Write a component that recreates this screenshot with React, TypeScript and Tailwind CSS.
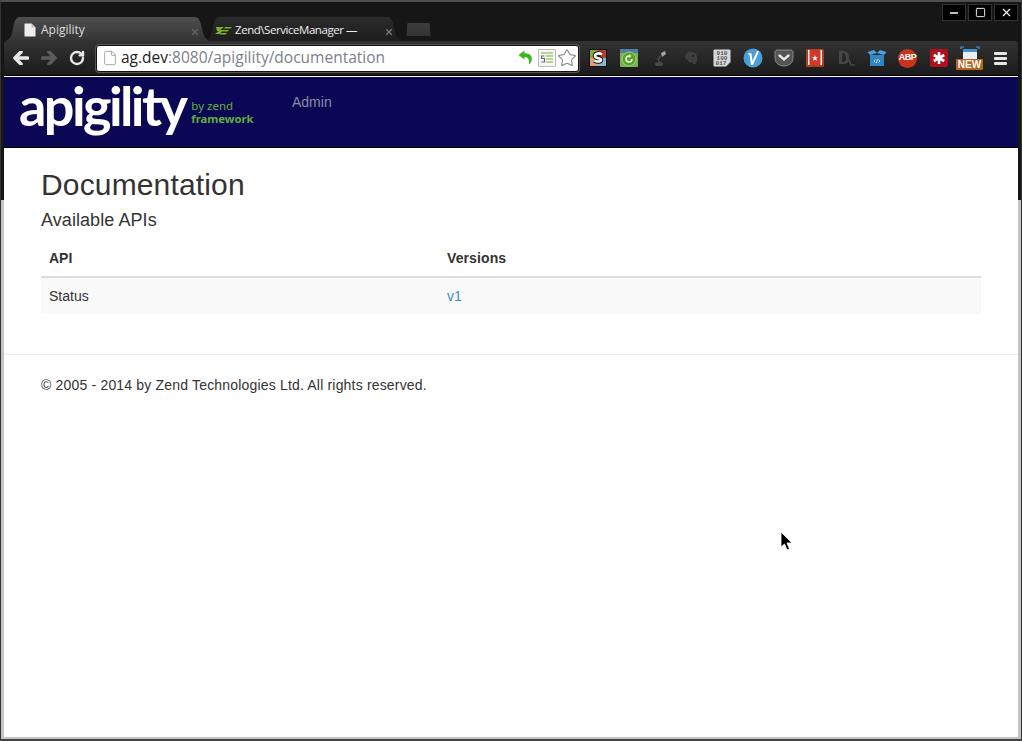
import { File, Minus, RotateCw, Square, Star, X } from "lucide-react"

const uiFont = "font-['Open_Sans','Noto_Sans',sans-serif]"

function TabShape({ from, to, id }: { from: string; to: string; id: string }) {
  return (
    <svg className="absolute inset-0" width="100%" height="100%" viewBox="0 0 208 24" preserveAspectRatio="none">
      <defs>
        <linearGradient id={id} x1="0" y1="0" x2="0" y2="1">
          <stop offset="0" stopColor={from} />
          <stop offset="1" stopColor={to} />
        </linearGradient>
      </defs>
      <path d="M0 24C5 23 7 18 8 12C9.5 4 11 0 15 0H192C197 0 198 4 199.5 10C201 18 203 23 208 24Z" fill={`url(#${id})`} />
    </svg>
  )
}

function ZendMark() {
  return (
    <svg width="17" height="9" viewBox="0 0 17 9">
      <path d="M1 1H9L5 4H8L5 8H0L4 5H2Z M10 1H17L15 2.5H9Z M8 4H14L12.5 5.5H7Z M6 7H12L10.5 8.5H5Z" fill="#7ab51d" />
    </svg>
  )
}

function NavArrow({ color, flip }: { color: string; flip?: boolean }) {
  return (
    <svg width="16" height="14" viewBox="0 0 16 14" className={flip ? "-scale-x-100" : ""}>
      <path d="M8 1L2 7L8 13M3 7H14.5" fill="none" stroke={color} strokeWidth="3.6" strokeLinecap="round" strokeLinejoin="round" />
    </svg>
  )
}

function IconS() {
  return (
    <svg width="18" height="18" viewBox="0 0 18 18">
      <rect width="18" height="18" fill="#111" />
      <rect x="1" y="1" width="8" height="8" fill="#8aa63c" />
      <rect x="9" y="1" width="8" height="8" fill="#b8402c" />
      <rect x="1" y="9" width="8" height="8" fill="#d9a07a" />
      <rect x="9" y="9" width="8" height="8" fill="#8ab8d8" />
      <path d="M13 5.5C11 3.8 6 4 6 7C6 10 12 8.5 12 11C12 13 8 13 5.5 11.5" fill="none" stroke="#111" strokeWidth="4.4" />
      <path d="M13 5.5C11 3.8 6 4 6 7C6 10 12 8.5 12 11C12 13 8 13 5.5 11.5" fill="none" stroke="#fff" strokeWidth="2.6" />
    </svg>
  )
}

function IconSync() {
  return (
    <svg width="18" height="18" viewBox="0 0 18 18">
      <rect width="18" height="18" rx="1" fill="#7fb04f" />
      <rect width="18" height="4" fill="#4f7fa8" />
      <circle cx="9" cy="10" r="7" fill="#58a030" stroke="#a4d47c" />
      <path d="M12 10A3 3 0 1 1 9 7" fill="none" stroke="#e8f5dc" strokeWidth="1.6" />
      <path d="M9 5V9L11.5 7Z" fill="#e8f5dc" />
    </svg>
  )
}

function IconLamp() {
  return (
    <svg width="18" height="18" viewBox="0 0 18 18">
      <path d="M10 4L14 2L15 5L11 8Z" fill="#a4a4a4" />
      <path d="M10 7L7 10L9 13" fill="none" stroke="#444" strokeWidth="2" />
      <ellipse cx="8" cy="15" rx="4" ry="2" fill="#4a4a4a" />
    </svg>
  )
}

function IconElephant() {
  return (
    <svg width="18" height="18" viewBox="0 0 18 18">
      <path d="M4 5C6 2 12 2 14 5C16 8 15 12 14 15H11L10 13C8 14 6 13 6 11C4 11 3 9 3 7Z" fill="#3f3f3f" />
      <circle cx="11" cy="7" r="1" fill="#222" />
    </svg>
  )
}

function IconBinary() {
  return (
    <svg width="18" height="18" viewBox="0 0 18 18">
      <path d="M1.5 0.5H16.5L17.5 1.5V13L13 17.5H1.5L0.5 16.5V1.5Z" fill="#d8d8d8" stroke="#888" strokeWidth="0.6" />
      <g fontFamily="'Liberation Mono', monospace" fontSize="6" fontWeight="700" fill="#555" textAnchor="middle">
        <text x="9" y="6">010</text>
        <text x="9" y="11">100</text>
        <text x="8" y="16">017</text>
      </g>
    </svg>
  )
}

function IconVimeo() {
  return (
    <svg width="20" height="20" viewBox="0 0 20 20">
      <circle cx="10" cy="10" r="9.5" fill="#4a9fd8" />
      <path d="M4.5 5.5C6 5 7.5 5 8.5 5.5L9.5 13L14 3L16 3.5L10 17H8L6.5 7Z" fill="#fff" />
    </svg>
  )
}

function IconPocket() {
  return (
    <svg width="20" height="18" viewBox="0 0 20 18">
      <path d="M1 3C1 2 2 1 3 1H17C18 1 19 2 19 3V9C19 14 15 17 10 17C5 17 1 14 1 9Z" fill="#555" stroke="#999" strokeWidth="0.8" />
      <path d="M5.5 6.5L10 10.5L14.5 6.5" fill="none" stroke="#e8e8e8" strokeWidth="2.4" strokeLinecap="round" />
    </svg>
  )
}

function IconBookmark() {
  return (
    <svg width="18" height="18" viewBox="0 0 18 18">
      <rect width="18" height="18" rx="1.5" fill="#a8431f" />
      <rect x="3" y="1" width="12" height="15" fill="#d0392b" />
      <rect x="2" y="1" width="1.5" height="15" fill="#eee" />
      <rect x="14.5" y="1" width="1.5" height="15" fill="#eee" />
      <path d="M9 6L9.8 8.2H12L10.2 9.5L10.9 11.7L9 10.4L7.1 11.7L7.8 9.5L6 8.2H8.2Z" fill="#fff" />
    </svg>
  )
}

function IconD() {
  return (
    <svg width="20" height="18" viewBox="0 0 20 18">
      <path d="M3 2H7C11 2 13 5 13 9C13 13 11 15 7 15H3Z M6 4V13H7C9 13 10 11 10 9C10 6 9 4 7 4Z" fill="#464646" fillRule="evenodd" />
      <path d="M13 11L15 16H19" fill="none" stroke="#555" strokeWidth="1.2" />
    </svg>
  )
}

function IconBox() {
  return (
    <svg width="20" height="18" viewBox="0 0 20 18">
      <path d="M3 6H17V17H3Z" fill="#2f86c0" />
      <path d="M3 6L0.5 3L7 1L10 4L13 1L19.5 3L17 6L10 4Z" fill="#4ba3dc" />
      <path d="M7 12L8.5 10.5M7 12L8.5 13.5M13 12L11.5 10.5M13 12L11.5 13.5M9.5 14L10.5 10" stroke="#cfe8f8" strokeWidth="0.8" />
    </svg>
  )
}

function IconAbp() {
  return (
    <div className="flex h-[19px] w-[19px] items-center justify-center rounded-full bg-[#c8351c]">
      <span className="font-['Liberation_Sans',sans-serif] text-[9px] font-bold tracking-[-0.5px] text-white">ABP</span>
    </div>
  )
}

function IconLastPass() {
  return (
    <svg width="18" height="18" viewBox="0 0 18 18">
      <rect width="18" height="18" rx="2" fill="#b0101e" />
      <path d="M9 3V15M3.8 6L14.2 12M14.2 6L3.8 12" stroke="#fff" strokeWidth="2.6" />
    </svg>
  )
}

function IconNew() {
  return (
    <div className="relative flex h-[24px] w-[27px] flex-col items-center">
      <svg width="20" height="16" viewBox="0 0 20 16">
        <path d="M1 3V1H4M16 1H19V3" fill="none" stroke="#4a9fd8" strokeWidth="1.2" />
        <rect x="3" y="3" width="14" height="12" fill="#e8eef4" />
        <rect x="3" y="3" width="14" height="3" fill="#4a8fc8" />
      </svg>
      <span className="absolute bottom-0 left-0 right-0 rounded-[1px] bg-[#b5651d] text-center font-['Liberation_Sans',sans-serif] text-[10px] font-bold leading-[11px] text-white">
        NEW
      </span>
    </div>
  )
}

function IconMenu() {
  return (
    <div className="flex w-[13px] flex-col gap-[2px]">
      <div className="h-[3px] rounded-[1px] bg-[#e6e6e6]" />
      <div className="h-[3px] rounded-[1px] bg-[#e6e6e6]" />
      <div className="h-[3px] rounded-[1px] bg-[#e6e6e6]" />
    </div>
  )
}

const extensions = [
  <IconS />, <IconSync />, <IconLamp />, <IconElephant />, <IconBinary />, <IconVimeo />, <IconPocket />,
  <IconBookmark />, <IconD />, <IconBox />, <IconAbp />, <IconLastPass />, <IconNew />, <IconMenu />,
]

export default function App() {
  return (
    <div className="relative flex h-[741px] w-[1022px] flex-col overflow-hidden border-x border-b-2 border-t-2 border-x-[#333] border-b-[#444] border-t-[#4f4f4f] bg-[linear-gradient(to_bottom,#161616_198px,#c4c4c4_198px)]">
      {/* tab strip */}
      <div className={`flex h-[39px] shrink-0 items-start justify-between ${uiFont}`}>
        <div className="mt-[15px] flex items-start pl-[4px]">
          <div className="relative z-10 flex h-[24px] w-[205px] items-center pt-[2px] text-[12px] text-[#ddd]">
            <TabShape id="tabActive" from="#4e4e4e" to="#343434" />
            <svg width="12" height="14" viewBox="0 0 12 14" className="relative ml-[19px]">
              <path d="M0.5 0.5H7.5L11.5 4.5V13.5H0.5Z" fill="#eee" />
              <path d="M7.5 0.5V4.5H11.5" fill="#bbb" />
            </svg>
            <span className="relative ml-[5px]">Apigility</span>
            <X size={10} strokeWidth={3} className="absolute right-[10px] top-[10px] text-[#666]" />
          </div>
          <div className="relative -ml-[5px] flex h-[24px] w-[197px] items-center pt-[2px] text-[11.5px] tracking-[-0.45px] text-[#eee]">
            <TabShape id="tabOther" from="#2b2b2b" to="#1d1d1d" />
            <span className="relative ml-[10px]"><ZendMark /></span>
            <span className="relative ml-[3px]">Zend\ServiceManager —</span>
            <X size={10} strokeWidth={3} className="absolute right-[8px] top-[10px] text-[#777]" />
          </div>
          <div className="relative ml-[4px] mt-[6px] h-[13px] w-[25px]">
            <TabShape id="tabNew" from="#3d3d3d" to="#333" />
          </div>
        </div>
        <div className="mr-[3px] mt-[2px] flex gap-[2px]">
          <div className="flex h-[17px] w-[24px] items-center justify-center border border-[#333] bg-black text-white"><Minus size={12} strokeWidth={3} /></div>
          <div className="flex h-[17px] w-[24px] items-center justify-center border border-[#333] bg-black text-white"><Square size={11} strokeWidth={2} /></div>
          <div className="flex h-[17px] w-[24px] items-center justify-center border border-[#333] bg-black text-white"><X size={13} strokeWidth={2} /></div>
        </div>
      </div>

      {/* toolbar */}
      <div className="mx-[3px] flex h-[35px] shrink-0 items-center rounded-t-[3px] border-b border-black bg-[linear-gradient(to_bottom,#333,#1b1b1b)] pl-[3px]">
        <div className="flex w-[28px] justify-center"><NavArrow color="#e8e8e8" /></div>
        <div className="flex w-[28px] justify-center"><NavArrow color="#5c5c5c" flip /></div>
        <div className="flex w-[28px] justify-center text-[#e8e8e8]"><RotateCw size={16} strokeWidth={3.6} /></div>
        <div className={`ml-[5px] flex h-[27px] w-[483px] shrink-0 items-center rounded-[3px] border border-[#111] bg-white shadow-[0_0_0_1px_#555] ${uiFont}`}>
          <File size={16} className="ml-[5px] text-[#999]" strokeWidth={1.3} />
          <span className="ml-[3px] text-[15.5px] text-[#222]">ag.dev<span className="text-[#7c808c]">:8080/apigility/documentation</span></span>
          <div className="ml-auto flex items-center">
            <svg width="16" height="16" viewBox="0 0 16 16">
              <path d="M6.5 0.5L0.5 5L6.5 9.5V7C10 7 11.5 9 11 14.5C14.5 12 16.5 3.5 6.5 3.2Z" fill="#36b81f" />
            </svg>
            <div className="ml-[4px] flex h-[18px] w-[18px] items-center justify-center rounded-[1px] border border-[#bbb] bg-[#f6f6f6]">
              <svg width="14" height="14" viewBox="0 0 14 14">
                <path d="M1 2H13M6 5H13M6 8H13M6 11H13" stroke="#7ab52e" strokeWidth="1.2" />
                <path d="M4.5 5H1.5V7.5H4.5V11H1.5" fill="none" stroke="#666" strokeWidth="1.1" />
              </svg>
            </div>
            <Star size={20} strokeWidth={1.3} className="ml-[1px] mr-[1px] text-[#888]" />
          </div>
        </div>
        <div className="ml-[3px] flex items-center">
          {extensions.map((icon, i) => (
            <div key={i} className="flex h-[26px] w-[31px] items-center justify-center">{icon}</div>
          ))}
        </div>
      </div>

      {/* page */}
      <div className="mx-[3px] mb-[2px] flex min-h-0 flex-1 flex-col border-t border-white bg-white font-['Liberation_Sans',Arial,sans-serif] text-[14px] text-[#333]">
        <div className="flex h-[71px] shrink-0 items-start border-b border-black bg-[#0a0854]">
          <div className="flex w-[288px] shrink-0 items-start pl-[15px]">
            <span className="-mt-[1px] font-['Lato',sans-serif] text-[54px] font-bold leading-[60px] tracking-[-2.6px] text-white">apigility</span>
            <div className="ml-[6px] mt-[22px] flex flex-col font-['Noto_Sans',sans-serif] text-[#63ad3e]">
              <span className="text-[11.5px] leading-[13px]">by zend</span>
              <span className="text-[11.3px] font-bold leading-[13px]">framework</span>
            </div>
          </div>
          <a className="mt-[15px] leading-[20px] text-[#8a8aa6]">Admin</a>
        </div>

        <div className="px-[37px]">
          <h1 className="mt-[20px] text-[30px] leading-[33px] tracking-[0.15px]">Documentation</h1>
          <h3 className="mt-[9px] text-[18px] leading-[20px] tracking-[0.07px]">Available APIs</h3>
          <table className="mt-[10px] w-full">
            <thead>
              <tr className="border-b-2 border-[#ddd]">
                <th className="w-[398px] p-[8px] text-left font-bold leading-[20px]">API</th>
                <th className="p-[8px] text-left font-bold leading-[20px] tracking-[0.1px]">Versions</th>
              </tr>
            </thead>
            <tbody>
              <tr className="bg-[#f9f9f9]">
                <td className="p-[8px] leading-[20px]">Status</td>
                <td className="p-[8px] leading-[20px] text-[#428bca]">v1</td>
              </tr>
            </tbody>
          </table>
        </div>

        <div className="mt-[40px] border-t border-[#eee] px-[37px] pt-[20px] leading-[20px] tracking-[0.18px]">
          © 2005 - 2014 by Zend Technologies Ltd. All rights reserved.
        </div>
      </div>

      {/* mouse pointer */}
      <svg className="absolute left-[779px] top-[529px]" width="14" height="21" viewBox="0 0 14 21">
        <path d="M1 1V16L4.5 13L7 19L9.5 18L7 12H12Z" fill="#000" stroke="#fff" strokeWidth="0.8" />
      </svg>
    </div>
  )
}
